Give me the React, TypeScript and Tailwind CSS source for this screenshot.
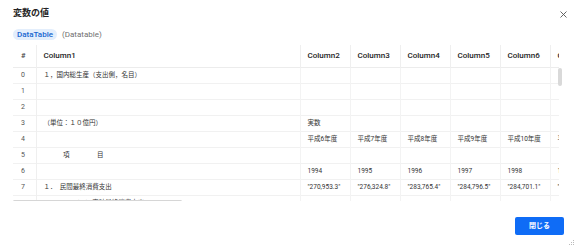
import React from "react";

const cols = ["Column2", "Column3", "Column4", "Column5", "Column6", "Column7"];

type Row = { c1: string; rest: string[] };

const rows: Row[] = [
  { c1: "１，国内総生産（支出側，名目）", rest: ["", "", "", "", "", ""] },
  { c1: "", rest: ["", "", "", "", "", ""] },
  { c1: "", rest: ["", "", "", "", "", ""] },
  { c1: "（単位：１０億円）", rest: ["実数", "", "", "", "", ""] },
  { c1: "", rest: ["平成6年度", "平成7年度", "平成8年度", "平成9年度", "平成10年度", "平成11年度"] },
  { c1: "　　　項　　　　 目", rest: ["", "", "", "", "", ""] },
  { c1: "", rest: ["1994", "1995", "1996", "1997", "1998", "1999"] },
  { c1: "１．　民間最終消費支出", rest: ["\"270,953.3\"", "\"276,324.8\"", "\"283,765.4\"", "\"284,796.5\"", "\"284,701.1\"", "\"285,000.0\""] },
  { c1: "　　　　　（１）家計最終消費支出", rest: ["", "", "", "", "", ""] },
];

const font = { fontFamily: '"Segoe UI", Roboto, "Noto Sans CJK JP", sans-serif' };

export default function App() {
  return (
    <div className="relative w-[577px] h-[248px] bg-white overflow-hidden" style={font}>
      <div className="flex flex-col px-[13px]">
        <div className="h-[28px] flex items-center justify-between">
          <span className="text-[9px] font-semibold text-[#242424]">変数の値</span>
          <svg width="7" height="7" viewBox="0 0 7 7" className="mr-[-3px]">
            <path d="M0.5 0.5 L6.5 6.5 M6.5 0.5 L0.5 6.5" stroke="#555" strokeWidth="0.9" />
          </svg>
        </div>
        <div className="h-[11px] mt-[1px] flex items-center gap-[5px]">
          <span className="h-[11px] w-[44px] flex items-center justify-center rounded-full bg-[#e3eefc] text-[#1665d0] text-[8px] font-medium">DataTable</span>
          <span className="text-[8px] text-[#707070]">(Datatable)</span>
        </div>
        <div className="relative mt-[5px] h-[156px] w-[551px] overflow-hidden">
          <div className="w-[546px] h-full overflow-hidden">
            <table className="border-collapse table-fixed" style={{ width: 23 + 264 + 50 * 6 }}>
              <colgroup>
                <col style={{ width: 23 }} />
                <col style={{ width: 264 }} />
                {cols.map((c) => (
                  <col key={c} style={{ width: 50 }} />
                ))}
              </colgroup>
              <thead>
                <tr className="h-[22px] border-b border-[#ececec]">
                  <th className="text-left font-medium text-[7.5px] text-[#444] pl-[8px] border-r border-[#efefef]">#</th>
                  <th className="text-left font-medium text-[8px] text-[#242424] pl-[7px] border-r border-[#efefef]">Column1</th>
                  {cols.map((c) => (
                    <th key={c} className="text-left font-medium text-[8px] text-[#242424] pl-[7px] border-r border-[#efefef] whitespace-nowrap overflow-hidden">
                      {c}
                    </th>
                  ))}
                </tr>
              </thead>
              <tbody>
                {rows.map((r, i) => (
                  <tr key={i} className="h-[16px] border-b border-[#f1f1f1]">
                    <td className="text-[7px] text-[#555] pl-[8px] border-r border-[#efefef] leading-[15px]">{i}</td>
                    <td className="text-[6.5px] text-[#333] pl-[7px] border-r border-[#f3f3f3] whitespace-pre leading-[15px]">{r.c1}</td>
                    {r.rest.map((v, j) => (
                      <td key={j} className="text-[6.5px] text-[#333] pl-[7px] border-r border-[#f3f3f3] whitespace-nowrap overflow-hidden leading-[15px]">
                        {v}
                      </td>
                    ))}
                  </tr>
                ))}
              </tbody>
            </table>
          </div>
          <div className="absolute left-[545px] top-[23px] w-[4px] h-[18px] rounded-full bg-[#d9d9d9]" />
          <div className="absolute left-0 top-[155px] w-[169px] h-[3px] rounded-full bg-[#d6d6d6]" />
        </div>
        <div className="flex justify-end mt-[16px]">
          <button className="w-[49px] h-[18px] rounded-[2px] bg-[#0f6cf6] text-white text-[7px] font-bold">閉じる</button>
        </div>
      </div>
      <svg className="absolute right-[2px] bottom-[2px]" width="6" height="6" viewBox="0 0 6 6">
        <rect x="4" y="0" width="1" height="1" fill="#bbb" />
        <rect x="2" y="2" width="1" height="1" fill="#bbb" />
        <rect x="4" y="2" width="1" height="1" fill="#bbb" />
        <rect x="0" y="4" width="1" height="1" fill="#bbb" />
        <rect x="2" y="4" width="1" height="1" fill="#bbb" />
        <rect x="4" y="4" width="1" height="1" fill="#bbb" />
      </svg>
    </div>
  );
}
